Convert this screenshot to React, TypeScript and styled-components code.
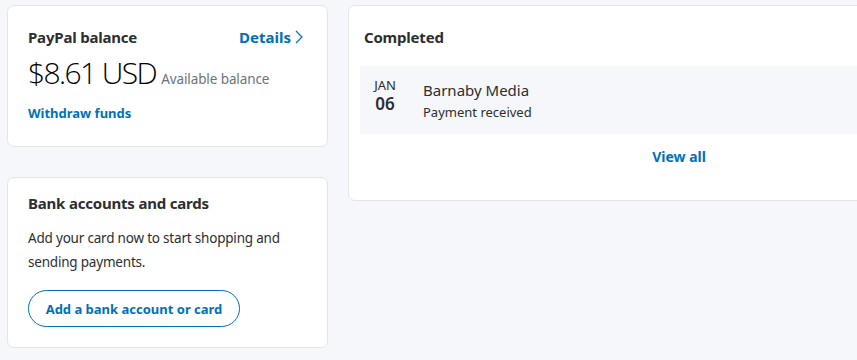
import React from "react";
import styled, { createGlobalStyle } from "styled-components";

const Global = createGlobalStyle`
  html, body { margin: 0; padding: 0; background: #f5f7fa; overflow: hidden; }
  body { font-family: "Noto Sans", "Open Sans", sans-serif; color: #2c2e2f; }
  * { box-sizing: border-box; }
`;

const Page = styled.div`
  display: grid;
  grid-template-columns: 321px 662px;
  column-gap: 20px;
  padding: 5px 0 0 7px;
  width: 1100px;
  align-items: start;
`;

const Column = styled.div`
  display: flex;
  flex-direction: column;
  gap: 30px;
`;

const Card = styled.section<{ $h: number }>`
  background: #fff;
  border: 1px solid #e3e5e8;
  border-radius: 7px;
  height: ${(p) => p.$h}px;
`;

const BalanceCard = styled(Card)`
  padding: 20px 24px 0 20px;
`;

const HeaderRow = styled.div`
  display: flex;
  justify-content: space-between;
  align-items: center;
  height: 22px;
`;

const Title = styled.h2`
  margin: 0;
  font-size: 15px;
  font-weight: 700;
  letter-spacing: -0.2px;
  color: #2c2e2f;
  line-height: 22px;
`;

const Link = styled.a`
  color: #0070ba;
  font-weight: 700;
  text-decoration: none;
  cursor: pointer;
`;

const DetailsLink = styled(Link)`
  display: flex;
  align-items: center;
  gap: 4px;
  font-size: 15px;
`;

const AmountRow = styled.div`
  display: flex;
  align-items: baseline;
  gap: 5px;
  margin-top: 6px;
`;

const Amount = styled.span`
  font-family: "Open Sans", "Noto Sans", sans-serif;
  font-size: 30px;
  font-weight: 300;
  letter-spacing: -1.6px;
  color: #000;
  line-height: 38px;
`;

const AmountNote = styled.span`
  font-size: 13.5px;
  letter-spacing: -0.1px;
  color: #6c7378;
`;

const Withdraw = styled(Link)`
  display: block;
  font-size: 13px;
  margin-top: 12px;
`;

const BankCard = styled(Card)`
  padding: 14px 20px 0 20px;
`;

const Text = styled.p`
  margin: 12px 0 0;
  font-size: 13.5px;
  letter-spacing: -0.2px;
  line-height: 24px;
  color: #2c2e2f;
`;

const OutlineButton = styled.button`
  margin-top: 16px;
  height: 37px;
  width: 212px;
  border: 1px solid #0070ba;
  border-radius: 19px;
  background: #fff;
  color: #0070ba;
  font-family: inherit;
  font-size: 13px;
  font-weight: 700;
  cursor: pointer;
`;

const ActivityCard = styled(Card)`
  padding: 20px 0 0 11px;
`;

const SectionTitle = styled(Title)`
  padding-left: 4px;
`;

const TxRow = styled.div`
  display: flex;
  align-items: flex-start;
  background: #f5f7fa;
  height: 68px;
  margin-top: 18px;
  padding: 12px 0 0 13px;
`;

const DateBox = styled.div`
  display: flex;
  flex-direction: column;
  align-items: center;
  width: 24px;
  margin-right: 26px;
`;

const Month = styled.span`
  font-size: 13px;
  line-height: 15px;
  color: #2c2e2f;
`;

const Day = styled.span`
  font-size: 17px;
  line-height: 19px;
  margin-top: 1px;
  font-weight: 600;
  color: #2c2e2f;
`;

const TxInfo = styled.div`
  display: flex;
  flex-direction: column;
  margin-top: -2px;
`;

const TxName = styled.span`
  font-size: 15px;
  line-height: 22px;
  margin-top: 3px;
`;

const TxType = styled.span`
  font-size: 13px;
  line-height: 20px;
  margin-top: 1px;
`;

const ViewAll = styled(Link)`
  display: block;
  text-align: center;
  font-size: 14px;
  margin-top: 13px;
  padding-right: 11px;
`;

export default function App() {
  return (
    <>
      <Global />
      <Page>
        <Column>
          <BalanceCard $h={142}>
            <HeaderRow>
              <Title>PayPal balance</Title>
              <DetailsLink>
                Details
                <svg width="8" height="14" viewBox="0 0 8 14" fill="none">
                  <path d="M1 1l6 6-6 6" stroke="#0070ba" strokeWidth="1.2" />
                </svg>
              </DetailsLink>
            </HeaderRow>
            <AmountRow>
              <Amount>$8.61 USD</Amount>
              <AmountNote>Available balance</AmountNote>
            </AmountRow>
            <Withdraw>Withdraw funds</Withdraw>
          </BalanceCard>
          <BankCard $h={171}>
            <Title>Bank accounts and cards</Title>
            <Text>
              Add your card now to start shopping and
              <br />
              sending payments.
            </Text>
            <OutlineButton>Add a bank account or card</OutlineButton>
          </BankCard>
        </Column>
        <ActivityCard $h={196}>
          <SectionTitle>Completed</SectionTitle>
          <TxRow>
            <DateBox>
              <Month>JAN</Month>
              <Day>06</Day>
            </DateBox>
            <TxInfo>
              <TxName>Barnaby Media</TxName>
              <TxType>Payment received</TxType>
            </TxInfo>
          </TxRow>
          <ViewAll>View all</ViewAll>
        </ActivityCard>
      </Page>
    </>
  );
}
